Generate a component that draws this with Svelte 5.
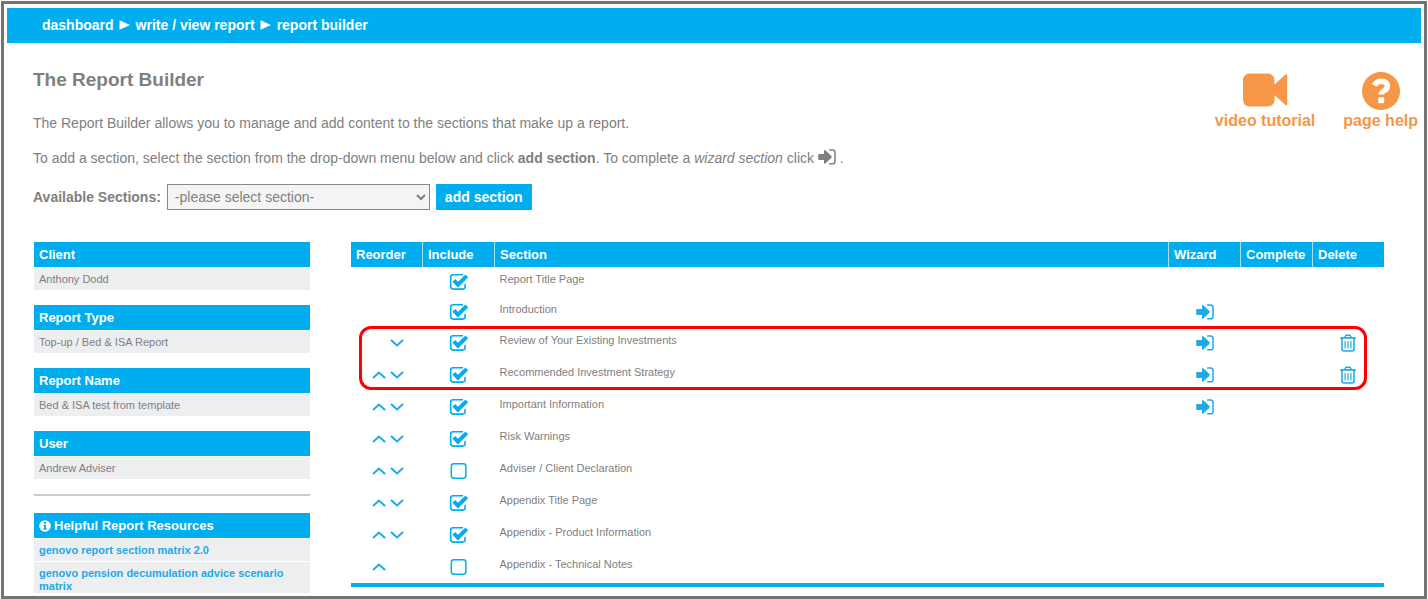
<script lang="ts">
  interface Section {
    id: number;
    name: string;
    included: boolean;
    up: boolean;
    down: boolean;
    wizard: boolean;
    removable: boolean;
  }

  const details = [
    { label: 'Client', value: 'Anthony Dodd' },
    { label: 'Report Type', value: 'Top-up / Bed & ISA Report' },
    { label: 'Report Name', value: 'Bed & ISA test from template' },
    { label: 'User', value: 'Andrew Adviser' }
  ];

  const resources = [
    'genovo report section matrix 2.0',
    'genovo pension decumulation advice scenario matrix'
  ];

  let sections: Section[] = $state([
    { id: 1, name: 'Report Title Page', included: true, up: false, down: false, wizard: false, removable: false },
    { id: 2, name: 'Introduction', included: true, up: false, down: false, wizard: true, removable: false },
    { id: 3, name: 'Review of Your Existing Investments', included: true, up: false, down: true, wizard: true, removable: true },
    { id: 4, name: 'Recommended Investment Strategy', included: true, up: true, down: true, wizard: true, removable: true },
    { id: 5, name: 'Important Information', included: true, up: true, down: true, wizard: true, removable: false },
    { id: 6, name: 'Risk Warnings', included: true, up: true, down: true, wizard: false, removable: false },
    { id: 7, name: 'Adviser / Client Declaration', included: false, up: true, down: true, wizard: false, removable: false },
    { id: 8, name: 'Appendix Title Page', included: true, up: true, down: true, wizard: false, removable: false },
    { id: 9, name: 'Appendix - Product Information', included: true, up: true, down: true, wizard: false, removable: false },
    { id: 10, name: 'Appendix - Technical Notes', included: false, up: true, down: false, wizard: false, removable: false }
  ]);

  let selected = $state('');

  function remove(id: number) {
    sections = sections.filter((s) => s.id !== id);
  }
</script>

{#snippet wizardIcon()}
  <svg class="wizard-icon" width="18" height="16" viewBox="0 0 18 16" aria-hidden="true">
    <path d="M1.2 4.9H6V1.9Q6.2 .5 7.4 1.2L13.4 7Q14.2 7.9 13.4 8.8L7.4 14.6Q6.2 15.3 6 13.9V10.9H1.2Q.2 10.9 .2 9.9V5.9Q.2 4.9 1.2 4.9Z" fill="currentColor" />
    <path d="M11.2 1H14.4Q17 1 17 3.6V12.2Q17 14.8 14.4 14.8H11.2" fill="none" stroke="currentColor" stroke-width="1.5" />
  </svg>
{/snippet}

<div class="page">
  <nav class="breadcrumb" aria-label="Breadcrumb">
    <a href="#dashboard">dashboard</a>
    <svg width="12" height="12" viewBox="0 0 12 12" aria-hidden="true"><path d="M.5 1.2L11 6L.5 10.8Z" fill="#fff" /></svg>
    <a href="#report">write / view report</a>
    <svg width="12" height="12" viewBox="0 0 12 12" aria-hidden="true"><path d="M.5 1.2L11 6L.5 10.8Z" fill="#fff" /></svg>
    <a href="#builder">report builder</a>
  </nav>

  <header class="intro">
    <div class="intro-text">
      <h1>The Report Builder</h1>
      <p>The Report Builder allows you to manage and add content to the sections that make up a report.</p>
      <p>
        To add a section, select the section from the drop-down menu below and click <strong>add section</strong>. To
        complete a <em>wizard section</em> click {@render wizardIcon()} .
      </p>
      <form class="add-form" onsubmit={(e) => e.preventDefault()}>
        <label for="available">Available Sections:</label>
        <select id="available" bind:value={selected}>
          <option value="">-please select section-</option>
        </select>
        <button class="add-button" type="submit">add section</button>
      </form>
    </div>

    <div class="help-links">
      <a href="#video">
        <svg width="46" height="40" viewBox="0 0 46 40" aria-hidden="true">
          <path d="M8 3.5H25Q32.5 3.5 32.5 11V14.5L43.5 4.4Q45.2 3.6 45.2 5.4V34Q45.2 35.8 43.5 35L32.5 25V29Q32.5 36.5 25 36.5H8Q1 36.5 1 29V11Q1 3.5 8 3.5Z" fill="currentColor" />
        </svg>
        <span>video tutorial</span>
      </a>
      <a href="#help">
        <svg width="40" height="40" viewBox="0 0 40 40" aria-hidden="true">
          <circle cx="20" cy="21" r="19" fill="currentColor" />
          <path d="M13.2 15.4Q15.6 11.2 20 11.2Q26.4 11.4 26.4 16.2Q26.2 19 23 20.8Q20.2 22.2 20.2 24.6" fill="none" stroke="#fff" stroke-width="5.4" />
          <rect x="17.2" y="27.2" width="6" height="6" rx="1" fill="#fff" />
        </svg>
        <span>page help</span>
      </a>
    </div>
  </header>

  <main class="content">
    <aside class="sidebar">
      {#each details as { label, value }}
        <section class="panel">
          <h2>{label}</h2>
          <p>{value}</p>
        </section>
      {/each}
      <hr />
      <section class="resources">
        <h2>
          <svg width="12" height="12" viewBox="0 0 12 12" aria-hidden="true">
            <circle cx="6" cy="6" r="5.8" fill="#fff" />
            <path d="M5 2H7V3.7H5ZM4.3 4.8H7V8.4H7.8V9.8H4.3V8.4H5.1V6.1H4.3Z" fill="#00aeef" />
          </svg>
          Helpful Report Resources
        </h2>
        {#each resources as resource}
          <a href="#resource">{resource}</a>
        {/each}
      </section>
    </aside>

    <div class="sections">
      <table>
        <thead>
          <tr>
            <th class="narrow">Reorder</th>
            <th class="narrow">Include</th>
            <th>Section</th>
            <th class="narrow">Wizard</th>
            <th class="narrow">Complete</th>
            <th class="narrow">Delete</th>
          </tr>
        </thead>
        <tbody>
          {#each sections as section (section.id)}
            <tr class:movable={section.up || section.down}>
              <td>
                <div class="reorder">
                  {#if section.up}
                    <button class="icon-button" aria-label="Move up">
                      <svg width="14" height="8" viewBox="0 0 14 8"><path d="M1 7L7 1.6L13 7" fill="none" stroke="currentColor" stroke-width="2" /></svg>
                    </button>
                  {/if}
                  {#if section.down}
                    <button class="icon-button down" aria-label="Move down">
                      <svg width="14" height="8" viewBox="0 0 14 8"><path d="M1 1L7 6.4L13 1" fill="none" stroke="currentColor" stroke-width="2" /></svg>
                    </button>
                  {/if}
                </div>
              </td>
              <td>
                <label class="tick">
                  <input type="checkbox" bind:checked={section.included} aria-label={section.name} />
                  {#if section.included}
                    <svg width="20" height="18" viewBox="0 0 20 18" aria-hidden="true">
                      <path d="M14 1.7H4.2Q1.7 1.7 1.7 4.2V13.6Q1.7 16.1 4.2 16.1H13.6Q16.1 16.1 16.1 13.6V11" fill="none" stroke="currentColor" stroke-width="1.6" />
                      <path d="M4.8 7.4L9 11.6L17.8 2.8" fill="none" stroke="currentColor" stroke-width="4" />
                    </svg>
                  {:else}
                    <svg width="20" height="18" viewBox="0 0 20 18" aria-hidden="true">
                      <rect x="2.3" y="1.8" width="14.6" height="14.4" rx="2.6" fill="none" stroke="currentColor" stroke-width="1.5" />
                    </svg>
                  {/if}
                </label>
              </td>
              <td class="name">{section.name}</td>
              <td>
                {#if section.wizard}
                  <button class="icon-button centered" aria-label="Open wizard">{@render wizardIcon()}</button>
                {/if}
              </td>
              <td></td>
              <td>
                {#if section.removable}
                  <button class="icon-button centered" aria-label="Delete section" onclick={() => remove(section.id)}>
                    <svg width="16" height="18" viewBox="0 0 16 18">
                      <g fill="none" stroke="currentColor" stroke-width="1.6">
                        <path d="M.3 3.9H15.7M4.8 3.6L6 1.2H10L11.2 3.6" />
                        <path d="M2 4.2V15Q2 17 4 17H12Q14 17 14 15V4.2" />
                        <path d="M5.1 7V14.4M8 7V14.4M10.9 7V14.4" stroke-width="1.2" />
                      </g>
                    </svg>
                  </button>
                {/if}
              </td>
            </tr>
          {/each}
        </tbody>
      </table>
      <div class="highlight"></div>
    </div>
  </main>
</div>

<style>
  :global(body) {
    background: #fff;
  }

  .page {
    box-sizing: border-box;
    min-height: calc(100vh - 2px);
    margin: 1px;
    padding: 4px 3px 3px;
    border: 3px solid #767374;
    font-family: 'Liberation Sans', Arial, sans-serif;
    font-size: 14px;
    color: #808080;
  }

  a {
    text-decoration: none;
  }

  .breadcrumb {
    display: flex;
    align-items: center;
    gap: 5px;
    height: 33px;
    padding: 0 35px 2px;
    background: #00aeef;
    font-weight: bold;
  }

  .breadcrumb a {
    color: #fff;
  }

  .intro {
    display: flex;
    justify-content: space-between;
    padding: 25px 3px 31px 26px;
  }

  h1 {
    margin: 0 0 21px;
    font-size: 19px;
    line-height: 24px;
  }

  .intro p {
    margin: 0 0 15px;
    line-height: 20px;
  }

  .intro .wizard-icon {
    vertical-align: -2px;
  }

  .add-form {
    display: flex;
    align-items: center;
    gap: 6px;
    height: 28px;
  }

  .add-form label {
    font-weight: bold;
  }

  select {
    width: 263px;
    height: 26px;
    padding: 0 3px;
    border: 1px solid #888;
    border-radius: 0;
    background: #f4f4f4;
    font-family: inherit;
    font-size: 14px;
    color: #808080;
  }

  .add-button {
    height: 26px;
    padding: 0 9px;
    border: none;
    background: #00aeef;
    font-family: inherit;
    font-size: 14px;
    font-weight: bold;
    color: #fff;
    cursor: pointer;
  }

  .help-links {
    display: flex;
    gap: 28px;
    padding-top: 2px;
  }

  .help-links a {
    display: flex;
    flex-direction: column;
    align-items: center;
    font-size: 16px;
    line-height: 22px;
    font-weight: bold;
    color: #f79646;
  }

  .content {
    display: flex;
    align-items: flex-start;
    gap: 41px;
    padding: 0 37px 0 27px;
  }

  .sidebar {
    flex: none;
    width: 276px;
  }

  h2 {
    display: flex;
    align-items: center;
    gap: 3px;
    margin: 0 0 1px;
    padding: 0 5px;
    background: #00aeef;
    font-size: 13px;
    line-height: 25px;
    color: #fff;
  }

  .panel {
    margin-bottom: 15px;
  }

  .panel p {
    margin: 0;
    padding: 0 5px;
    background: #edeef0;
    font-size: 11px;
    line-height: 22px;
  }

  hr {
    height: 2px;
    margin: 0 0 17px;
    border: none;
    background: #ccc;
  }

  .resources a {
    display: block;
    margin-bottom: 1px;
    padding: 5px 5px 4px;
    background: #edeef0;
    font-size: 11px;
    line-height: 13px;
    font-weight: bold;
    color: #1caae8;
  }

  .resources a:last-child {
    margin-bottom: 0;
    padding-bottom: 0;
  }

  .sections {
    position: relative;
    flex: 1;
  }

  table {
    width: 100%;
    border-collapse: collapse;
    table-layout: fixed;
    border-bottom: 4px solid #00aeef;
  }

  th {
    height: 25px;
    padding: 0 5px;
    border-left: 1px solid #a6e2fa;
    background: #00aeef;
    font-size: 13px;
    text-align: left;
    color: #fff;
  }

  th:first-child {
    border-left: none;
  }

  th.narrow {
    width: 61px;
  }

  td {
    height: 30px;
    padding: 0;
    vertical-align: middle;
  }

  .movable td {
    height: 32px;
  }

  td.name {
    padding: 0 0 6px 5px;
    box-sizing: border-box;
    font-size: 11px;
  }

  .reorder {
    display: flex;
    justify-content: flex-end;
    gap: 4px;
    padding-right: 19px;
  }

  .reorder .icon-button:only-child:not(.down) {
    margin-right: 18px;
  }

  .icon-button {
    display: block;
    padding: 0;
    border: none;
    background: none;
    color: #1caae8;
    cursor: pointer;
  }

  .icon-button.centered {
    margin: 0 auto;
  }

  .icon-button svg {
    display: block;
  }

  .tick {
    display: grid;
    width: 20px;
    height: 18px;
    margin: 0 auto;
    color: #00aeef;
    cursor: pointer;
  }

  .tick input {
    grid-area: 1 / 1;
    appearance: none;
    width: 20px;
    height: 18px;
    margin: 0;
  }

  .tick svg {
    grid-area: 1 / 1;
    pointer-events: none;
  }

  /* rings the two removable sections */
  .highlight {
    position: absolute;
    top: 84px;
    left: 8px;
    right: 17px;
    height: 58px;
    border: 3px solid #f00;
    border-radius: 12px;
    pointer-events: none;
  }
</style>
